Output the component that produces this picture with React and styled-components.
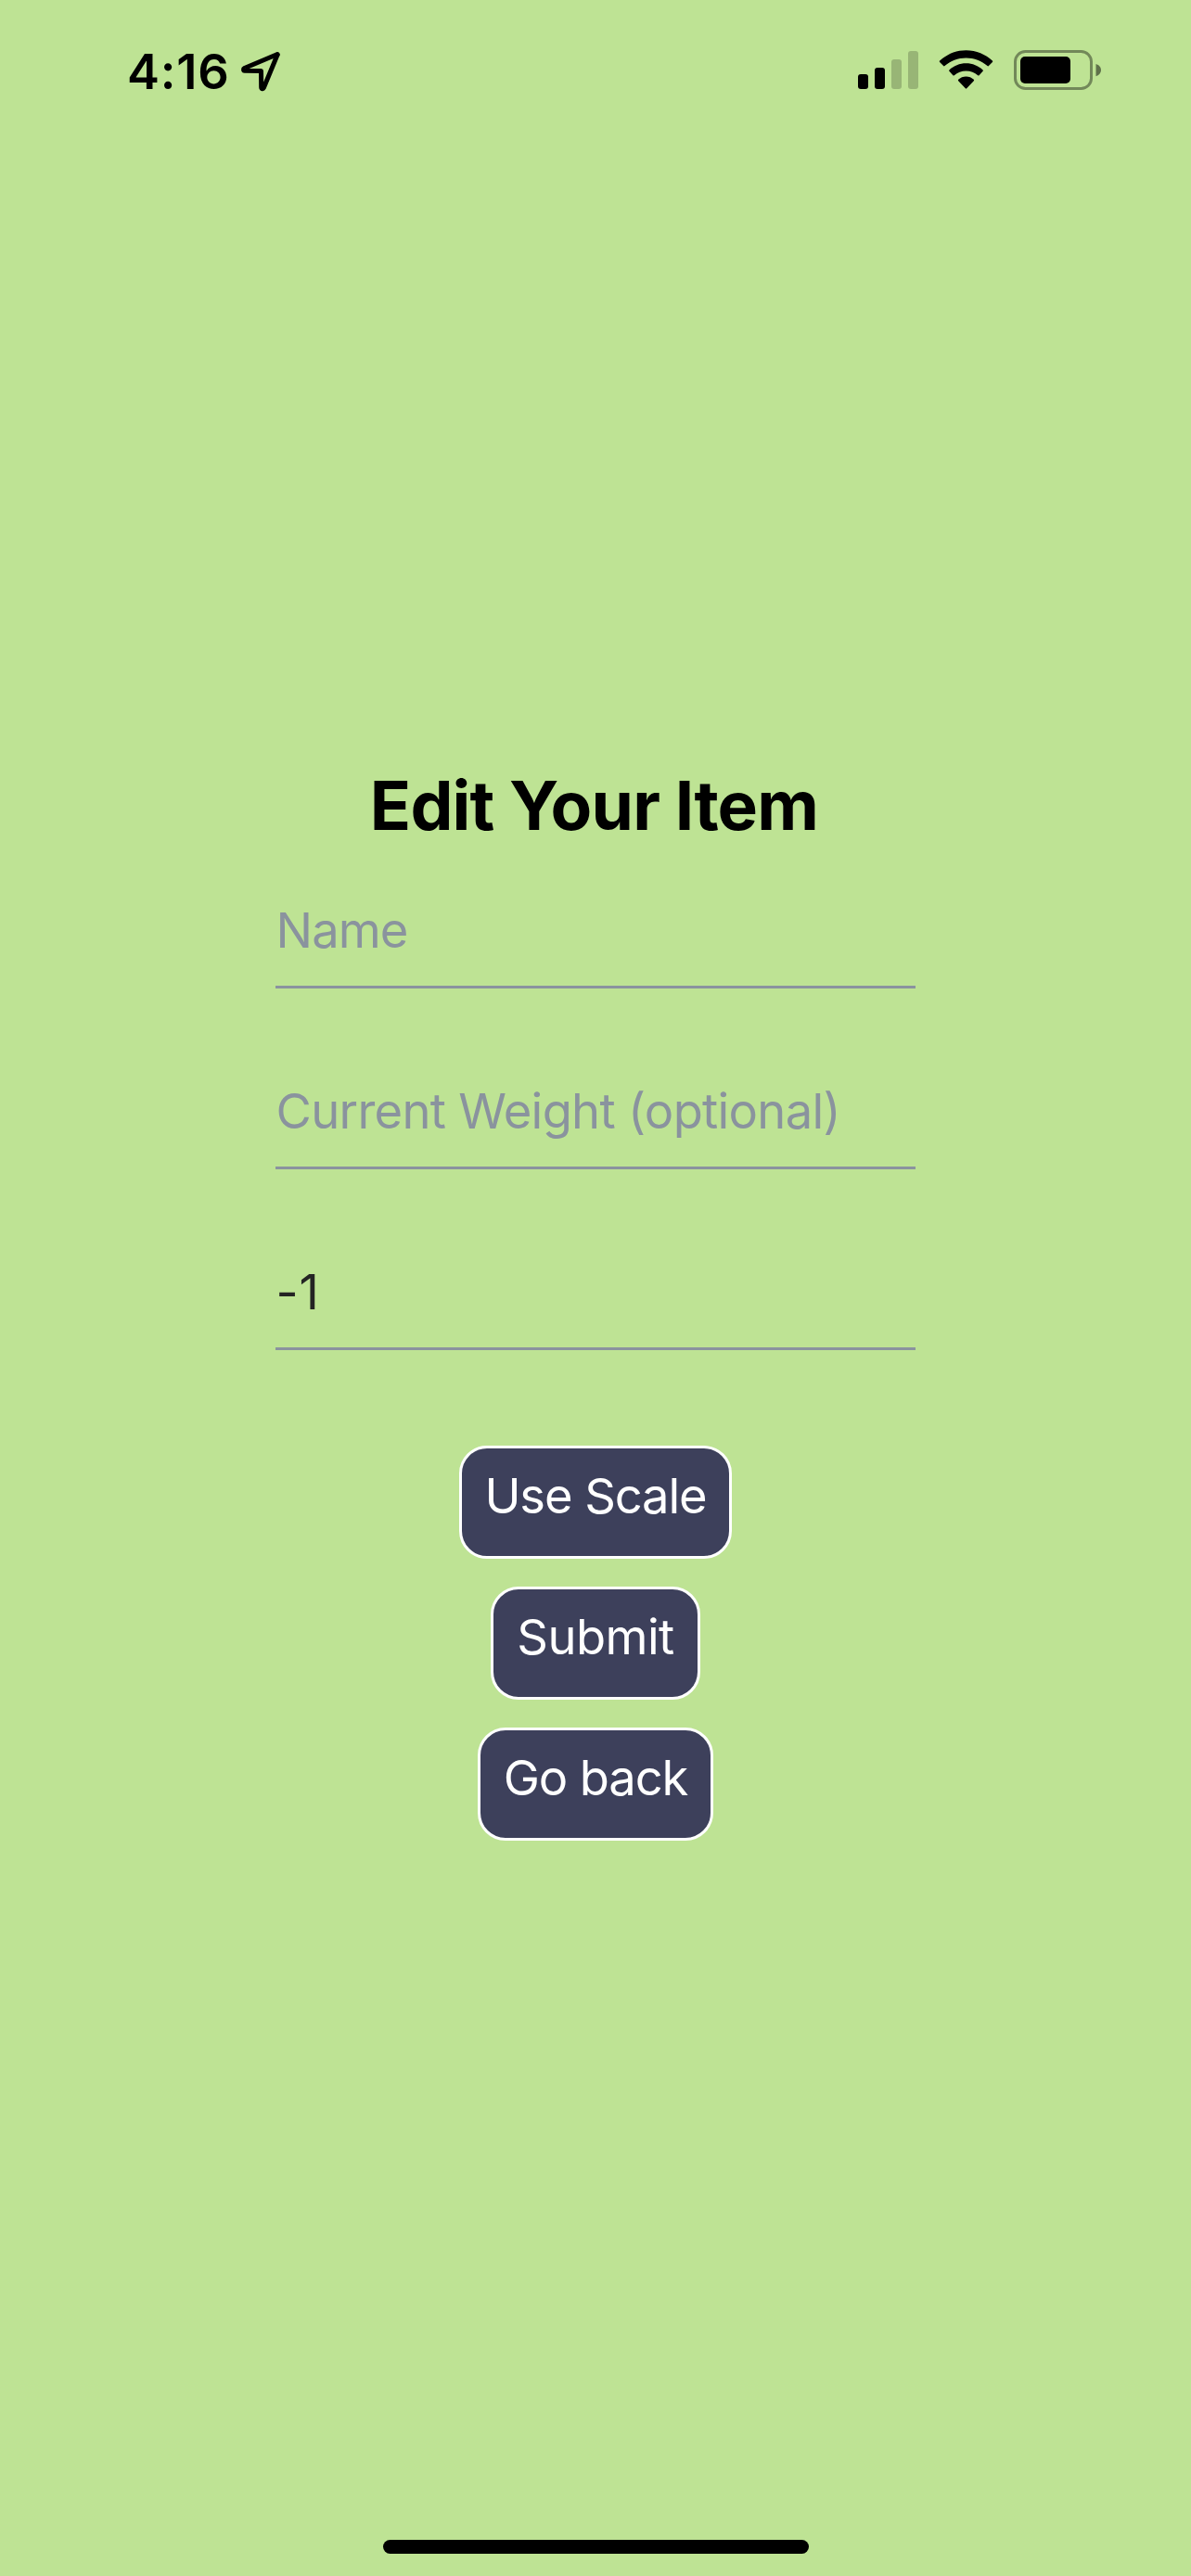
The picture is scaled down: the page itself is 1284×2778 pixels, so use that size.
import React from 'react';
import styled, { createGlobalStyle } from 'styled-components';

const GlobalStyle = createGlobalStyle`
  *, *::before, *::after { box-sizing: border-box; }
  body {
    margin: 0;
    background: #bee394;
    font-family: Inter, "Liberation Sans", sans-serif;
  }
`;

const Screen = styled.div`
  display: flex;
  flex-direction: column;
  width: 1284px;
  height: 2778px;
  background: #bee394;
  overflow: hidden;
`;

const StatusBar = styled.header`
  display: flex;
  justify-content: space-between;
  align-items: flex-start;
  height: 141px;
  padding: 54px 96px 0 137px;
`;

const StatusGroup = styled.div`
  display: flex;
  align-items: flex-start;
  gap: ${(p) => p.$gap}px;
`;

const Time = styled.span`
  width: 111px;
  font-size: 52.5px;
  font-weight: 600;
  line-height: 46px;
  letter-spacing: ${(p) => p.$tracking}px;
  white-space: nowrap;
`;

const Glyph = styled.svg`
  display: block;
  flex: none;
`;

const Form = styled.form`
  display: flex;
  flex-direction: column;
  align-items: center;
  flex: 1;
  padding-top: 683px;
`;

const Title = styled.h1`
  margin: 0 0 41px;
  padding-right: 3px;
  font-size: 73px;
  font-weight: 700;
  line-height: 90px;
  letter-spacing: ${(p) => p.$tracking}px;
  white-space: nowrap;
  color: #000;
`;

const Field = styled.input`
  width: 690px;
  height: 111px;
  margin-bottom: 84px;
  padding: 0 0 12px 0.5px;
  border: 0;
  border-bottom: 3px solid #8a939e;
  border-radius: 0;
  outline: 0;
  background: transparent;
  font-family: inherit;
  font-size: 52.5px;
  letter-spacing: ${(p) => p.$tracking}px;
  color: #242424;

  &::placeholder {
    color: #8a939e;
    opacity: 1;
  }
`;

const Actions = styled.div`
  display: flex;
  flex-direction: column;
  align-items: center;
  gap: 30px;
  margin-top: 19px;
`;

const Button = styled.button`
  display: flex;
  justify-content: center;
  width: ${(p) => p.$width}px;
  height: 122px;
  padding: 19px 0 0;
  border: 3px solid #fff;
  border-radius: 30px;
  background: #3d405b;
  font-family: inherit;
  font-size: 52.5px;
  line-height: 64px;
  letter-spacing: ${(p) => p.$tracking}px;
  white-space: nowrap;
  color: #fff;
`;

const HomeArea = styled.footer`
  display: flex;
  justify-content: center;
  height: 39px;
`;

const HomeIndicator = styled.div`
  width: 459px;
  height: 15px;
  border-radius: 8px;
  background: #000;
`;

const LocationArrow = () => (
  <Glyph width="46" height="46" viewBox="258 54 46 46">
    <path
      d="M299 59.3 C299.6 58.8 299.3 58.4 298.5 58.7 L263.5 73.5 C262 74.3 262.3 76.2 263.8 76.3 L281.5 76.6 L281.7 94.2 C281.8 96 283.6 96.3 284.3 94.8 Z"
      fill="none"
      stroke="#000"
      strokeWidth="5"
      strokeLinejoin="round"
    />
  </Glyph>
);

const Signal = () => (
  <Glyph width="66" height="43" viewBox="925 54 66 43">
    <rect x="925" y="80" width="11" height="16" rx="3" />
    <rect x="943" y="73" width="11" height="23" rx="3" />
    <rect x="961" y="64" width="11" height="32" rx="3" opacity="0.2" />
    <rect x="979" y="55" width="11" height="41" rx="3" opacity="0.2" />
  </Glyph>
);

const Wifi = () => (
  <Glyph width="59" height="43" viewBox="1012 54 59 43">
    <path d="M1041.5 54.2 C1052.5 54.2 1062.5 58.5 1069.9 65.6 Q1070.6 66.3 1069.9 67 L1065.9 71.1 Q1065.2 71.8 1064.5 71.1 C1058.4 65.5 1050.3 62.4 1041.5 62.4 C1032.7 62.4 1024.6 65.5 1018.5 71.1 Q1017.8 71.8 1017.1 71.1 L1013.1 67 Q1012.4 66.3 1013.1 65.6 C1020.5 58.5 1030.5 54.2 1041.5 54.2 Z" />
    <path d="M1041.5 68.3 C1048.4 68.3 1054.8 71 1059.6 75.4 Q1060.3 76.1 1059.6 76.8 L1055.6 81.2 Q1054.9 81.9 1054.2 81.2 C1050.8 78.2 1046.4 76.5 1041.5 76.5 C1036.6 76.5 1032.2 78.2 1028.8 81.2 Q1028.1 81.9 1027.4 81.2 L1023.4 76.8 Q1022.7 76.1 1023.4 75.4 C1028.2 71 1034.6 68.3 1041.5 68.3 Z" />
    <path d="M1041.5 82.5 C1044.6 82.5 1047.6 83.7 1049.8 85.8 Q1050.5 86.5 1049.8 87.2 L1042.2 95.3 Q1041.5 96 1040.8 95.3 L1033.2 87.2 Q1032.5 86.5 1033.2 85.8 C1035.4 83.7 1038.4 82.5 1041.5 82.5 Z" />
  </Glyph>
);

const Battery = () => (
  <Glyph width="95" height="43" viewBox="1093 54 95 43">
    <rect x="1094.5" y="55.5" width="82" height="40" rx="11" fill="none" stroke="#000" strokeWidth="3" opacity="0.4" />
    <rect x="1100" y="61" width="54" height="29" rx="5" />
    <path d="M1181.5 69 C1184.6 69.8 1187 72.5 1187 75.6 C1187 78.7 1184.6 81.4 1181.5 82.2 Z" opacity="0.5" />
  </Glyph>
);

const StatusIcons = styled(StatusGroup)`
  & > :first-child {
    margin-right: -1px;
  }
  & > :last-child {
    margin-left: 1px;
  }
`;

const fields = [
  { label: 'Name', placeholder: 'Name', tracking: -0.9 },
  { label: 'Current weight', placeholder: 'Current Weight (optional)', tracking: -0.7 },
  { label: 'Value', value: '-1', tracking: 0.8 },
];

const actions = [
  { text: 'Use Scale', width: 294, tracking: -1.1 },
  { text: 'Submit', width: 226, tracking: -0.55 },
  { text: 'Go back', width: 254, tracking: -1.1 },
];

export default function App() {
  return (
    <Screen>
      <GlobalStyle />
      <StatusBar>
        <StatusGroup $gap={10}>
          <Time $tracking={0.8}>4:16</Time>
          <LocationArrow />
        </StatusGroup>
        <StatusIcons $gap={21.5}>
          <Signal />
          <Wifi />
          <Battery />
        </StatusIcons>
      </StatusBar>
      <Form onSubmit={(e) => e.preventDefault()}>
        <Title $tracking={-0.8}>Edit Your Item</Title>
        {fields.map((f) => (
          <Field
            key={f.label}
            aria-label={f.label}
            placeholder={f.placeholder}
            defaultValue={f.value}
            $tracking={f.tracking}
          />
        ))}
        <Actions>
          {actions.map((a) => (
            <Button key={a.text} type="button" $width={a.width} $tracking={a.tracking}>
              {a.text}
            </Button>
          ))}
        </Actions>
      </Form>
      <HomeArea>
        <HomeIndicator />
      </HomeArea>
    </Screen>
  );
}
